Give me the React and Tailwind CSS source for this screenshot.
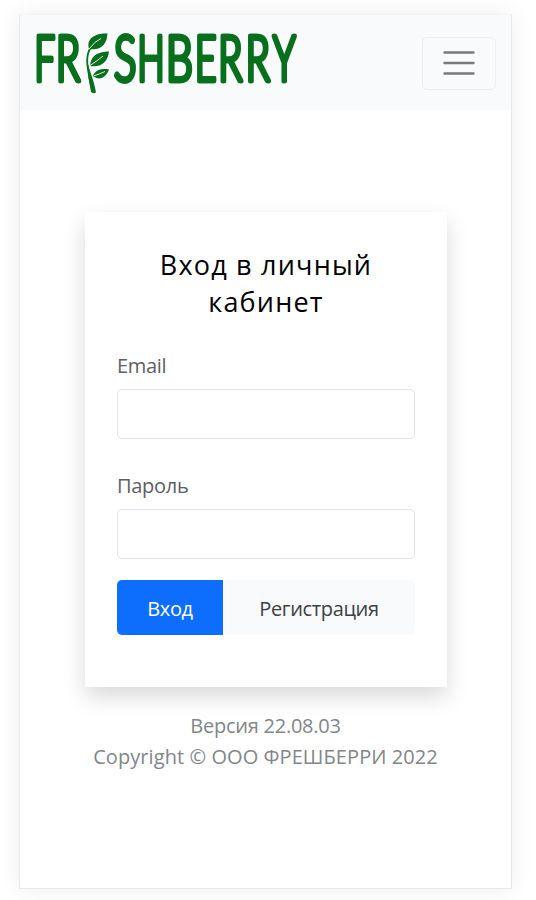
import { useState } from "react";

const LETTERS = [
	{ char: "F", x: 34, width: 20.5 },
	{ char: "R", x: 55.5, width: 24 },
	{ char: "S", x: 113.5, width: 22.3 },
	{ char: "H", x: 137, width: 27 },
	{ char: "B", x: 165.5, width: 26.8 },
	{ char: "E", x: 194.5, width: 21.5 },
	{ char: "R", x: 217.8, width: 24 },
	{ char: "R", x: 245.3, width: 24 },
	{ char: "Y", x: 272.5, width: 22.5 },
];

function Logo() {
	return (
		<svg
			viewBox="35 30 264 66"
			className="w-[264px] h-[66px] overflow-visible text-[#08701d]"
			fill="currentColor"
			aria-label="Freshberry"
		>
			{/* The flat shadow thickens the vertical strokes only */}
			<g className="[filter:drop-shadow(1.6px_0_0_#08701d)]">
				{LETTERS.map((letter) => (
					<text
						key={letter.x}
						x={letter.x}
						y="81"
						fontSize="64"
						textLength={letter.width}
						lengthAdjust="spacingAndGlyphs"
						stroke="currentColor"
						strokeWidth="4.4"
						strokeLinejoin="round"
						className="font-['Lato'] font-light"
					>
						{letter.char}
					</text>
				))}
			</g>
			{/* Twig in place of the first E */}
			<path
				d="M94 44 C87 50 86 58 88 69 C89 78 90 83 92.5 91"
				fill="none"
				stroke="currentColor"
				strokeWidth="1.8"
			/>
			<path d="M86.8 59 C87 70 89 81 91 92 Q93 94 96 92.5 C94 80 90 73 86.8 59Z" />
			<path d="M89 49 C86 39 94 33 107.5 33.5 C107 44 101 51 89 49Z" />
			<path d="M90 66 C91 54 99 52 109 51.5 C108 61 102 68 90 66Z" />
			<path d="M93 76 C95 70 101 68 109 69.5 C106 78 99 81 93 76Z" />
			<path
				d="M89 49 Q95 41 101 38.5 M90 65.5 Q97 61 103 56 M94 75.8 Q100 74 105 71.5"
				fill="none"
				stroke="#f8fafc"
				strokeWidth="0.9"
			/>
		</svg>
	);
}

function Field({ label, type, value, onChange }) {
	return (
		<label className="block">
			<span className="block h-[36px] text-[20px] leading-[25px] tracking-[-0.3px] text-[#5c6064]">
				{label}
			</span>
			<input
				type={type}
				value={value}
				onChange={(e) => onChange(e.target.value)}
				className="block w-full h-[50px] px-4 rounded-[5px] border border-[#e1e5e8] bg-white outline-none focus:border-blue-400"
			/>
		</label>
	);
}

export default function App() {
	const [email, setEmail] = useState("");
	const [password, setPassword] = useState("");

	return (
		<div className="h-[900px] overflow-hidden bg-white pt-[14px] pl-[19px] font-['Open_Sans','Noto_Sans',sans-serif]">
			<div className="w-[493px] h-[875px] bg-white border border-[#e9e9e9] border-t-[#f4f4f4] shadow-[0_0_22px_rgba(0,0,0,0.07)]">
				<header className="flex items-start justify-between h-[95px] pt-[15px] pl-[15px] pr-[15px] bg-[#f8fafc]">
					<Logo />
					<button
						aria-label="Menu"
						className="mt-[7px] flex items-center justify-center w-[74px] h-[53px] rounded-[5px] border border-[#eceef0]"
					>
						<svg viewBox="0 0 32 26" className="w-[32px] h-[26px] -mt-[2px]">
							<path
								d="M1.5 2.5 H30.5 M1.5 13 H30.5 M1.5 23.5 H30.5"
								stroke="#77797b"
								strokeWidth="2.4"
								strokeLinecap="round"
							/>
						</svg>
					</button>
				</header>

				<main className="pt-[102px] px-[65px]">
					<form
						onSubmit={(e) => e.preventDefault()}
						className="w-[362px] h-[475px] px-8 pt-[34px] bg-white shadow-[0_10px_21px_rgba(0,0,0,0.15)]"
					>
						<h1 className="mb-[33px] text-center text-[27px] leading-[37px] font-medium tracking-[1.2px] text-black">
							Вход в личный
							<br />
							кабинет
						</h1>
						<Field label="Email" type="email" value={email} onChange={setEmail} />
						<div className="h-[34px]" />
						<Field
							label="Пароль"
							type="password"
							value={password}
							onChange={setPassword}
						/>
						<div className="mt-[21px] flex h-[55px] rounded-[5px] overflow-hidden text-[20px] tracking-[-0.35px]">
							<button className="w-[106px] pt-[2px] bg-[#0d6efd] text-white">
								Вход
							</button>
							<button
								type="button"
								className="flex-1 pt-[2px] bg-[#f8fafc] text-[#3c4044]"
							>
								Регистрация
							</button>
						</div>
					</form>
				</main>

				<footer className="pt-[23px] text-center text-[20px] leading-[31px] text-[#82868a]">
					<p className="tracking-[-0.25px]">Версия 22.08.03</p>
					<p className="tracking-[0.07px]">Copyright © ООО ФРЕШБЕРРИ 2022</p>
				</footer>
			</div>
		</div>
	);
}
